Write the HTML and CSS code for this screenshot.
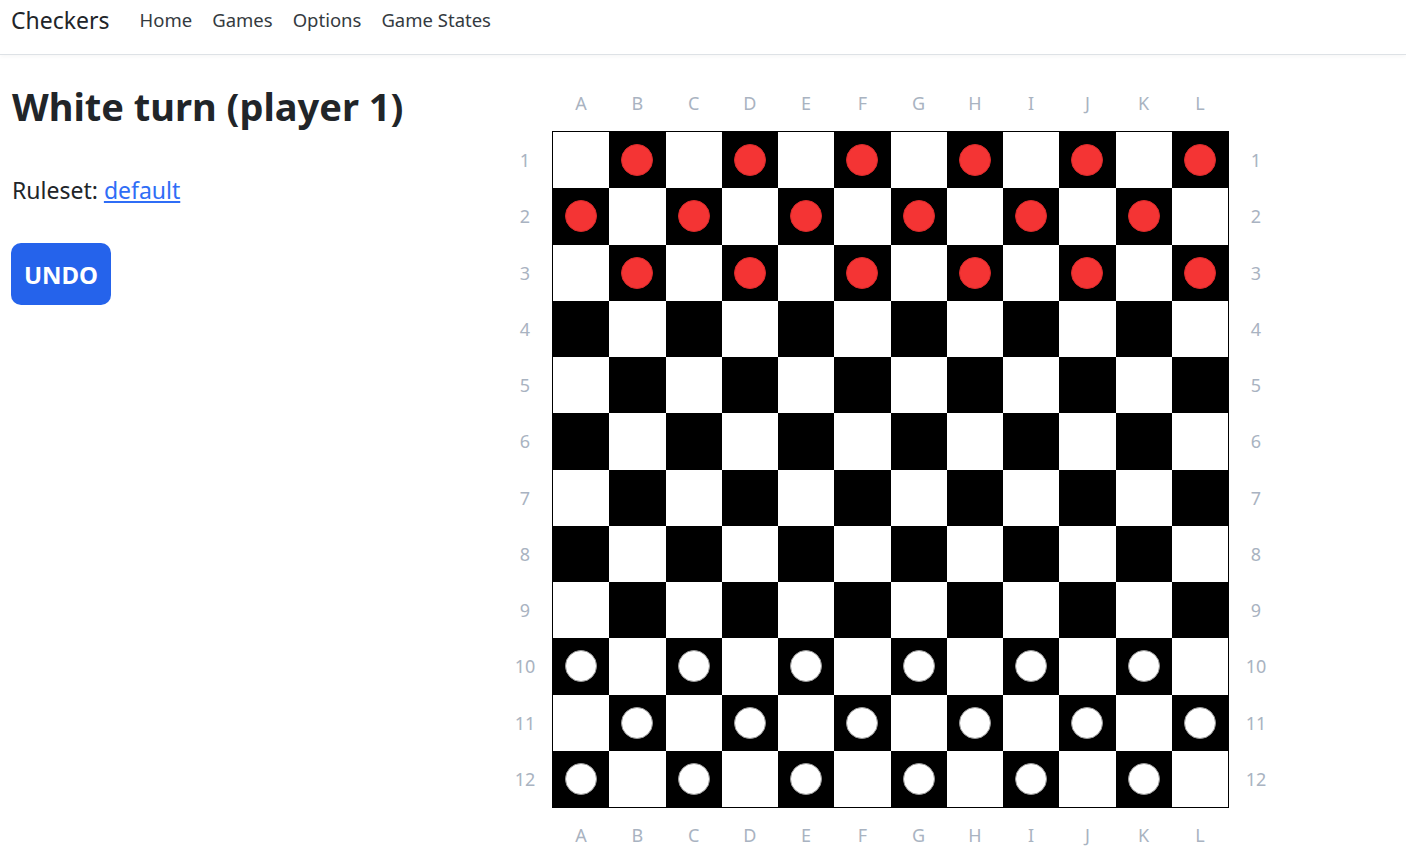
FILE: index.html
```html
<!DOCTYPE html>
<html lang="en">
<head>
<meta charset="utf-8">
<title>Checkers</title>
<link rel="stylesheet" href="styles.css">
</head>
<body>
<nav class="navbar">
  <a class="brand" href="#">Checkers</a>
  <ul class="nav-links">
    <li><a href="#">Home</a></li>
    <li><a href="#">Games</a></li>
    <li><a href="#">Options</a></li>
    <li><a href="#">Game States</a></li>
  </ul>
</nav>
<main class="main">
  <section class="info">
    <h1 class="title">White turn (player 1)</h1>
    <p class="ruleset">Ruleset: <a href="#">default</a></p>
    <button class="undo">UNDO</button>
  </section>
  <section class="board-wrap">
    <div class="cols top"><span>A</span><span>B</span><span>C</span><span>D</span><span>E</span><span>F</span><span>G</span><span>H</span><span>I</span><span>J</span><span>K</span><span>L</span></div>
    <div class="rows left"><span>1</span><span>2</span><span>3</span><span>4</span><span>5</span><span>6</span><span>7</span><span>8</span><span>9</span><span>10</span><span>11</span><span>12</span></div>
    <div class="board">
      <div class="brow"><div class="cell"></div><div class="cell"><i class="p red"></i></div><div class="cell"></div><div class="cell"><i class="p red"></i></div><div class="cell"></div><div class="cell"><i class="p red"></i></div><div class="cell"></div><div class="cell"><i class="p red"></i></div><div class="cell"></div><div class="cell"><i class="p red"></i></div><div class="cell"></div><div class="cell"><i class="p red"></i></div></div>
      <div class="brow"><div class="cell"><i class="p red"></i></div><div class="cell"></div><div class="cell"><i class="p red"></i></div><div class="cell"></div><div class="cell"><i class="p red"></i></div><div class="cell"></div><div class="cell"><i class="p red"></i></div><div class="cell"></div><div class="cell"><i class="p red"></i></div><div class="cell"></div><div class="cell"><i class="p red"></i></div><div class="cell"></div></div>
      <div class="brow"><div class="cell"></div><div class="cell"><i class="p red"></i></div><div class="cell"></div><div class="cell"><i class="p red"></i></div><div class="cell"></div><div class="cell"><i class="p red"></i></div><div class="cell"></div><div class="cell"><i class="p red"></i></div><div class="cell"></div><div class="cell"><i class="p red"></i></div><div class="cell"></div><div class="cell"><i class="p red"></i></div></div>
      <div class="brow"><div class="cell"></div><div class="cell"></div><div class="cell"></div><div class="cell"></div><div class="cell"></div><div class="cell"></div><div class="cell"></div><div class="cell"></div><div class="cell"></div><div class="cell"></div><div class="cell"></div><div class="cell"></div></div>
      <div class="brow"><div class="cell"></div><div class="cell"></div><div class="cell"></div><div class="cell"></div><div class="cell"></div><div class="cell"></div><div class="cell"></div><div class="cell"></div><div class="cell"></div><div class="cell"></div><div class="cell"></div><div class="cell"></div></div>
      <div class="brow"><div class="cell"></div><div class="cell"></div><div class="cell"></div><div class="cell"></div><div class="cell"></div><div class="cell"></div><div class="cell"></div><div class="cell"></div><div class="cell"></div><div class="cell"></div><div class="cell"></div><div class="cell"></div></div>
      <div class="brow"><div class="cell"></div><div class="cell"></div><div class="cell"></div><div class="cell"></div><div class="cell"></div><div class="cell"></div><div class="cell"></div><div class="cell"></div><div class="cell"></div><div class="cell"></div><div class="cell"></div><div class="cell"></div></div>
      <div class="brow"><div class="cell"></div><div class="cell"></div><div class="cell"></div><div class="cell"></div><div class="cell"></div><div class="cell"></div><div class="cell"></div><div class="cell"></div><div class="cell"></div><div class="cell"></div><div class="cell"></div><div class="cell"></div></div>
      <div class="brow"><div class="cell"></div><div class="cell"></div><div class="cell"></div><div class="cell"></div><div class="cell"></div><div class="cell"></div><div class="cell"></div><div class="cell"></div><div class="cell"></div><div class="cell"></div><div class="cell"></div><div class="cell"></div></div>
      <div class="brow"><div class="cell"><i class="p white"></i></div><div class="cell"></div><div class="cell"><i class="p white"></i></div><div class="cell"></div><div class="cell"><i class="p white"></i></div><div class="cell"></div><div class="cell"><i class="p white"></i></div><div class="cell"></div><div class="cell"><i class="p white"></i></div><div class="cell"></div><div class="cell"><i class="p white"></i></div><div class="cell"></div></div>
      <div class="brow"><div class="cell"></div><div class="cell"><i class="p white"></i></div><div class="cell"></div><div class="cell"><i class="p white"></i></div><div class="cell"></div><div class="cell"><i class="p white"></i></div><div class="cell"></div><div class="cell"><i class="p white"></i></div><div class="cell"></div><div class="cell"><i class="p white"></i></div><div class="cell"></div><div class="cell"><i class="p white"></i></div></div>
      <div class="brow"><div class="cell"><i class="p white"></i></div><div class="cell"></div><div class="cell"><i class="p white"></i></div><div class="cell"></div><div class="cell"><i class="p white"></i></div><div class="cell"></div><div class="cell"><i class="p white"></i></div><div class="cell"></div><div class="cell"><i class="p white"></i></div><div class="cell"></div><div class="cell"><i class="p white"></i></div><div class="cell"></div></div>
    </div>
    <div class="rows right"><span>1</span><span>2</span><span>3</span><span>4</span><span>5</span><span>6</span><span>7</span><span>8</span><span>9</span><span>10</span><span>11</span><span>12</span></div>
    <div class="cols bottom"><span>A</span><span>B</span><span>C</span><span>D</span><span>E</span><span>F</span><span>G</span><span>H</span><span>I</span><span>J</span><span>K</span><span>L</span></div>
  </section>
</main>
</body>
</html>
```
FILE: styles.css
```css
* { box-sizing: border-box; }
html, body { margin: 0; padding: 0; }
body {
  font-family: "Noto Sans", "Open Sans", sans-serif;
  color: #212529;
  background: #fff;
  overflow: hidden;
}
.navbar {
  height: 55px;
  display: flex;
  align-items: center;
  padding-left: 11px;
  border-bottom: 1px solid #dee2e6;
  box-shadow: 0 2px 4px rgba(0, 0, 0, 0.03);
}
.brand {
  font-size: 23px;
  color: #212529;
  text-decoration: none;
  margin-right: 20px;
  padding-bottom: 14px;
}
.nav-links {
  list-style: none;
  display: flex;
  margin: 0;
  padding: 0 0 16px 0;
}
.nav-links a {
  display: block;
  padding: 0 10px;
  font-size: 18.5px;
  color: #343a40;
  text-decoration: none;
}
.main {
  display: flex;
  align-items: flex-start;
}
.info {
  width: 497px;
  padding-left: 12px;
  padding-top: 29px;
}
.title {
  margin: 0;
  font-size: 38px;
  font-weight: 700;
  line-height: 1.2;
}
.ruleset {
  margin: 47px 0 0 0;
  font-size: 23px;
  line-height: 1.2;
}
.ruleset a { color: #2f6df6; }
.undo {
  display: block;
  margin-top: 39px;
  margin-left: -1px;
  width: 100px;
  height: 62px;
  border: none;
  border-radius: 10px;
  background: #2563eb;
  color: #fff;
  font-family: inherit;
  font-weight: 700;
  font-size: 24px;
  padding: 0;
}
.board-wrap {
  margin-top: 23px;
  display: grid;
  grid-template-columns: 56px 675px 56px;
  grid-template-rows: 54px 675px 56px;
}
.cols {
  grid-column: 2;
  display: grid;
  grid-template-columns: repeat(12, 1fr);
  align-items: center;
}
.cols.top { grid-row: 1; padding-bottom: 4px; }
.cols.bottom { grid-row: 3; }
.rows {
  grid-row: 2;
  display: grid;
  grid-template-rows: repeat(12, 1fr);
}
.rows.left { grid-column: 1; }
.rows.right { grid-column: 3; }
.cols span, .rows span {
  display: flex;
  align-items: center;
  justify-content: center;
  color: #a9b3c1;
  font-size: 18px;
}
.board {
  grid-column: 2;
  grid-row: 2;
  display: grid;
  grid-template-rows: repeat(12, 1fr);
  outline: 1px solid #000;
}
.brow {
  display: grid;
  grid-template-columns: repeat(12, 1fr);
}
.cell {
  display: flex;
  align-items: center;
  justify-content: center;
  background: #fff;
}
.brow:nth-child(odd) .cell:nth-child(even),
.brow:nth-child(even) .cell:nth-child(odd) {
  background: #000;
}
.p {
  display: block;
  width: 32px;
  height: 32px;
  border-radius: 50%;
}
.p.red {
  background: #f43434;
  border: 1px solid #d92a2a;
}
.p.white {
  background: #fff;
  border: 1px solid #9a9a9a;
}
```
